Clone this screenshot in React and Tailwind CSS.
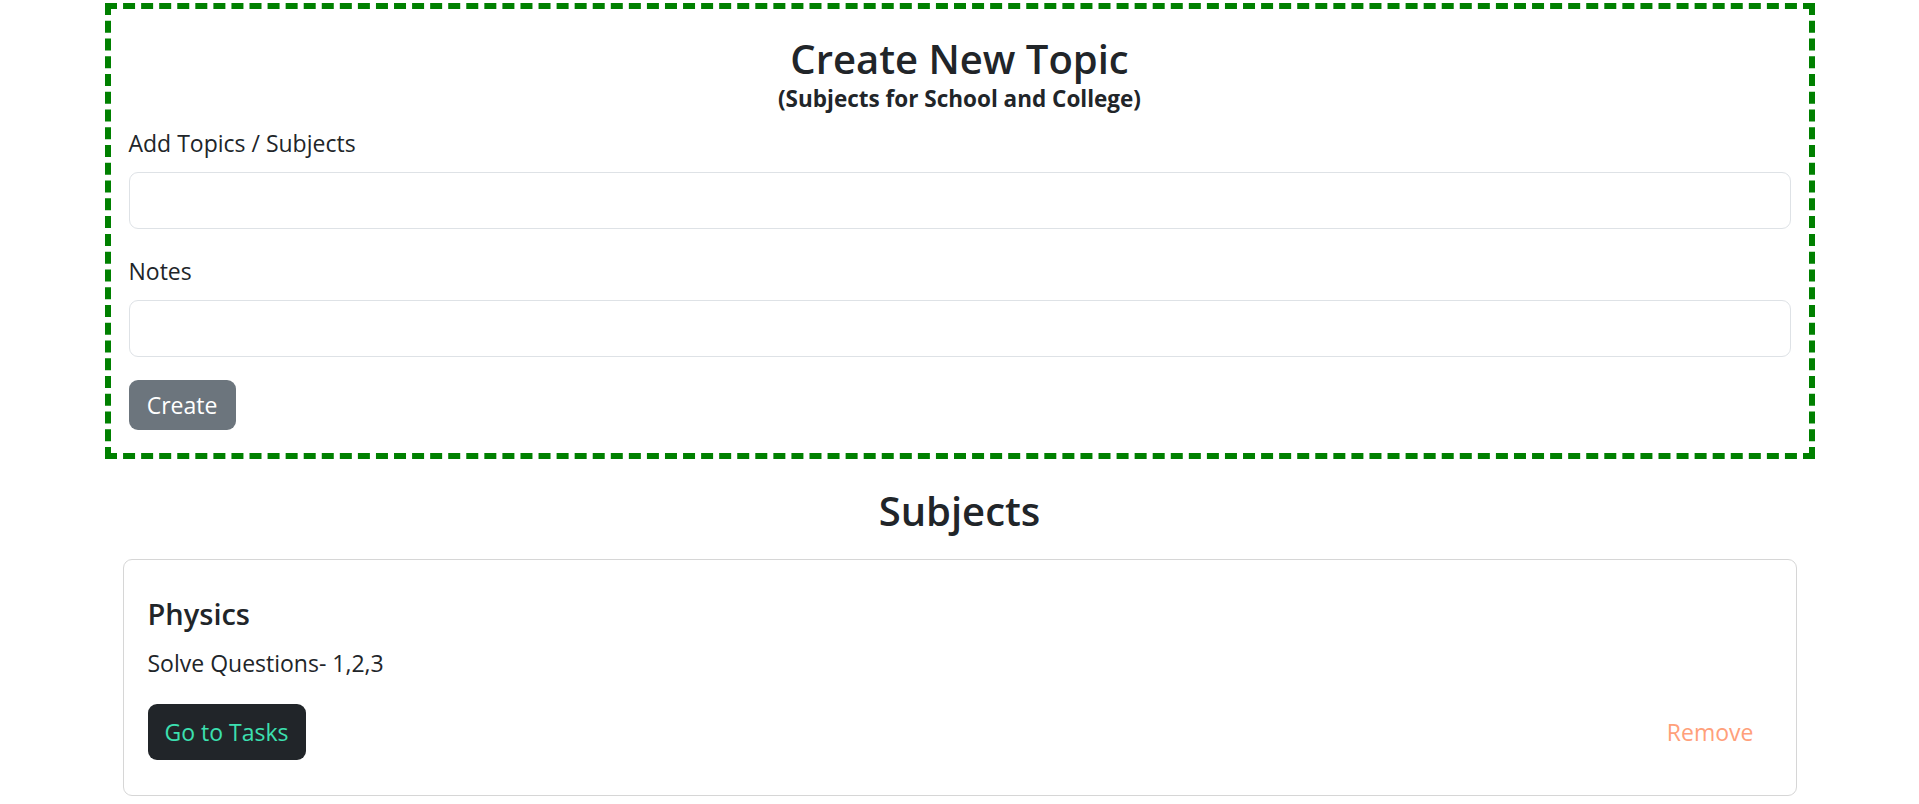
export default function App() {
  return (
    <div className="w-full font-['Open_Sans','Noto_Sans',sans-serif] text-[#212529] bg-white">
      <div className="mx-auto w-[1710px] pt-[3px]">
        <div className="border-[6px] border-dashed border-[#008000] px-[18px] pt-[25px] pb-[23px]">
          <h3 className="text-center text-[40px] leading-[50px] font-semibold">Create New Topic</h3>
          <h6 className="mt-[2px] text-center text-[22.5px] leading-[26px] font-bold">(Subjects for School and College)</h6>
          <label className="mt-[13px] mb-[11px] block text-[23px] leading-[36px]">Add Topics / Subjects</label>
          <input type="text" className="block h-[57px] w-full rounded-[9px] border border-[#dee2e6] bg-white px-[18px] text-[23px] outline-none" />
          <label className="mt-[24px] mb-[11px] block text-[23px] leading-[36px]">Notes</label>
          <input type="text" className="block h-[57px] w-full rounded-[9px] border border-[#dee2e6] bg-white px-[18px] text-[23px] outline-none" />
          <button className="mt-[23px] flex h-[50px] w-[107px] items-center justify-center rounded-[9px] bg-[#6c757d] text-[23px] text-white">
            Create
          </button>
        </div>
        <div className="px-[18px]">
          <h3 className="mt-[27px] text-center text-[40px] leading-[50px] font-semibold">Subjects</h3>
          <div className="mt-[23px] rounded-[9px] border border-[#d6d6d6] px-[24px] pt-[36px] pb-[35px]">
            <h5 className="text-[29px] leading-[36px] font-semibold">Physics</h5>
            <p className="mt-[13px] text-[23px] leading-[36px]">Solve Questions- 1,2,3</p>
            <div className="mt-[23px] flex items-center justify-between">
              <button className="flex h-[56px] w-[158px] items-center justify-center rounded-[9px] bg-[#212529] text-[23px] text-[#3ce0b0]">
                Go to Tasks
              </button>
              <button className="flex h-[56px] items-center px-[18px] text-[23px] text-[#ffa07a]">
                Remove
              </button>
            </div>
          </div>
        </div>
      </div>
    </div>
  );
}
